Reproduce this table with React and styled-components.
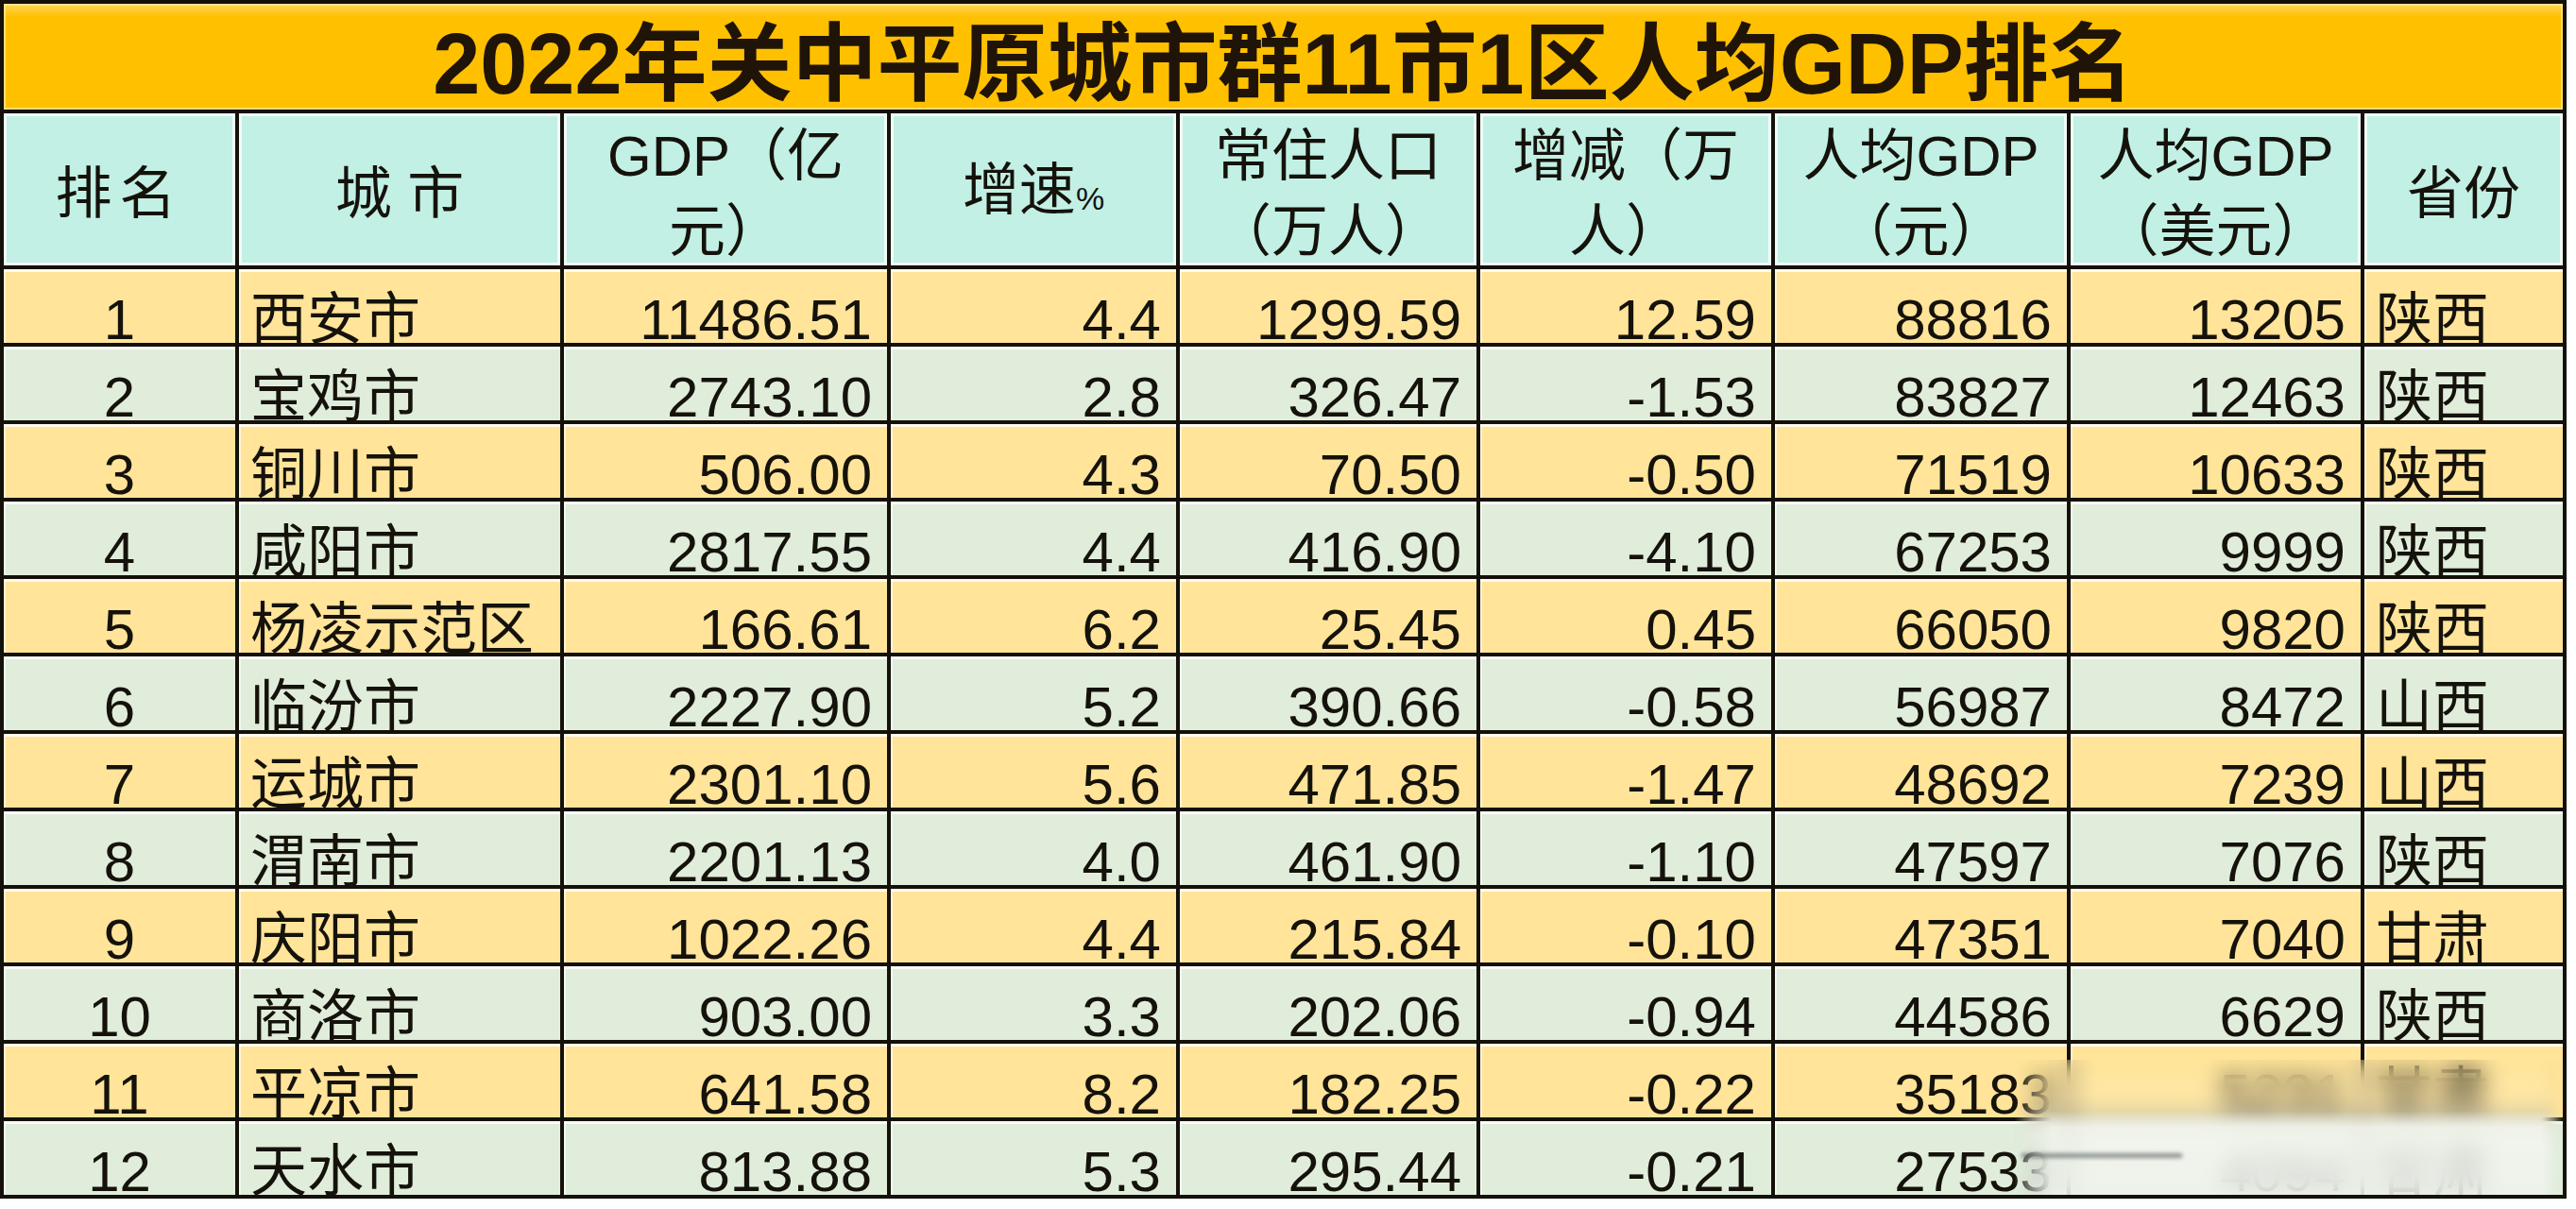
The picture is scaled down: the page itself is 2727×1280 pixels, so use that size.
import React from "react";
import styled, {createGlobalStyle} from "styled-components";

// sheet colours
const colors = {
  line: "#14110a",
  title: "#ffc000",
  head: "#c2f0e4",
  odd: "#ffe49a",
  even: "#e0eddb",
  ink: "#15120c",
};

const GlobalStyle = createGlobalStyle`
  body {
    margin: 0;
    background: #ffffff;
    font-family: "Liberation Sans", "Noto Sans CJK SC", sans-serif;
    color: ${colors.ink};
  }
`;

const Sheet = styled.div`
  position: relative;
  width: 2717px;
  box-sizing: border-box;
  padding: 4px;
  background: ${colors.line};
  display: grid;
  grid-template-columns: 245px 340px 342px 302px 314px 308px 309px 307px 210px;
  grid-template-rows: 112px 161px repeat(12, 78px);
  gap: 4px;
`;

const Title = styled.div`
  grid-column: 1 / -1;
  display: flex;
  align-items: center;
  justify-content: center;
  background: linear-gradient(
    to bottom,
    #ffd75a 0px,
    ${colors.title} 14px,
    ${colors.title} 100%
  );
  box-shadow: inset 0 0 0 2px rgba(255, 236, 160, 0.7);
  font-size: 90px;
  font-weight: 700;
  color: #1f1407;
`;

const HeadCell = styled.div`
  box-sizing: border-box;
  padding: 10px 8px 0;
  display: flex;
  align-items: center;
  justify-content: center;
  text-align: center;
  background: ${colors.head};
  box-shadow: inset 0 0 0 3px rgba(255, 255, 255, 0.75);
  font-size: 60px;
  line-height: 80px;
  letter-spacing: ${({$spaced}) => ($spaced ? "8px" : "0")};
`;

const Small = styled.span`
  font-size: 34px;
`;

const Cell = styled.div`
  box-sizing: border-box;
  display: flex;
  align-items: flex-end;
  justify-content: ${({$align}) =>
    $align === "left" ? "flex-start" : $align === "center" ? "center" : "flex-end"};
  padding: 0 ${({$align}) => ($align === "right" ? "16px" : "0")} 0
    ${({$align}) => ($align === "left" ? "12px" : "0")};
  background: ${({$tone}) => ($tone === "odd" ? colors.odd : colors.even)};
  box-shadow: inset 0 3px 0 rgba(255, 255, 255, 0.8),
    inset 2px 0 0 rgba(255, 255, 255, 0.6);
  font-size: 60px;
  line-height: 48px;
  white-space: nowrap;
`;

// blurred watermark smear over the bottom-right corner
const Smudge = styled.div`
  position: absolute;
  left: 2132px;
  top: 1122px;
  width: 582px;
  height: 143px;
  backdrop-filter: blur(12px);
  background: linear-gradient(
    to bottom,
    rgba(255, 255, 255, 0) 0%,
    rgba(255, 250, 230, 0.2) 38%,
    rgba(245, 246, 240, 0.85) 50%,
    rgba(240, 243, 238, 0.8) 100%
  );
  -webkit-mask-image: linear-gradient(to right, transparent 0, #000 40px, #000 96%, transparent 100%);
  mask-image: linear-gradient(to right, transparent 0, #000 40px, #000 96%, transparent 100%);
`;

const SmudgeStreak = styled.div`
  position: absolute;
  left: 2140px;
  top: 1221px;
  width: 170px;
  height: 5px;
  background: rgba(60, 70, 70, 0.55);
  filter: blur(2px);
`;

const heads = [
  "排名",
  "城 市",
  "GDP（亿元）",
  null,
  "常住人口（万人）",
  "增减（万人）",
  "人均GDP（元）",
  "人均GDP（美元）",
  "省份",
];

const rows = [
  ["1", "西安市", "11486.51", "4.4", "1299.59", "12.59", "88816", "13205", "陕西"],
  ["2", "宝鸡市", "2743.10", "2.8", "326.47", "-1.53", "83827", "12463", "陕西"],
  ["3", "铜川市", "506.00", "4.3", "70.50", "-0.50", "71519", "10633", "陕西"],
  ["4", "咸阳市", "2817.55", "4.4", "416.90", "-4.10", "67253", "9999", "陕西"],
  ["5", "杨凌示范区", "166.61", "6.2", "25.45", "0.45", "66050", "9820", "陕西"],
  ["6", "临汾市", "2227.90", "5.2", "390.66", "-0.58", "56987", "8472", "山西"],
  ["7", "运城市", "2301.10", "5.6", "471.85", "-1.47", "48692", "7239", "山西"],
  ["8", "渭南市", "2201.13", "4.0", "461.90", "-1.10", "47597", "7076", "陕西"],
  ["9", "庆阳市", "1022.26", "4.4", "215.84", "-0.10", "47351", "7040", "甘肃"],
  ["10", "商洛市", "903.00", "3.3", "202.06", "-0.94", "44586", "6629", "陕西"],
  ["11", "平凉市", "641.58", "8.2", "182.25", "-0.22", "35183", "5231", "甘肃"],
  ["12", "天水市", "813.88", "5.3", "295.44", "-0.21", "27533", "4094", "甘肃"],
];

const alignFor = (i) => (i === 0 ? "center" : i === 1 || i === 8 ? "left" : "right");

export default function App() {
  return (
    <>
      <GlobalStyle />
      <Sheet>
        <Title>2022年关中平原城市群11市1区人均GDP排名</Title>
        {heads.map((h, i) => (
          <HeadCell key={i} $spaced={i === 0}>
            {h === null ? (
              <span>
                增速<Small>%</Small>
              </span>
            ) : (
              h
            )}
          </HeadCell>
        ))}
        {rows.map((row, r) =>
          row.map((v, i) => (
            <Cell key={r + "-" + i} $tone={r % 2 === 0 ? "odd" : "even"} $align={alignFor(i)}>
              {v}
            </Cell>
          ))
        )}
        <Smudge />
        <SmudgeStreak />
      </Sheet>
    </>
  );
}
